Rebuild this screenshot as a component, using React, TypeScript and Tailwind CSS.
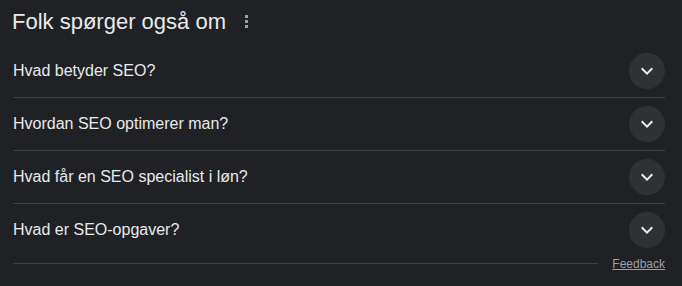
import React from "react";

const questions = [
    "Hvad betyder SEO?",
    "Hvordan SEO optimerer man?",
    "Hvad får en SEO specialist i løn?",
    "Hvad er SEO-opgaver?",
];

// Material "expand more" chevron
const Chevron: React.FC = () => (
    <svg width="24" height="24" viewBox="0 0 24 24" fill="#e8eaed">
        <path d="M7.41 8.59L12 13.17l4.59-4.58L18 10l-6 6-6-6 1.41-1.41z" />
    </svg>
);

const App: React.FC = () => {
    return (
        <div
            className="min-h-screen w-full bg-[#202124] text-[#e8eaed] pl-[12px] pr-[17px]"
            style={{ fontFamily: '"Liberation Sans", Arial, sans-serif' }}
        >
            {/* Heading */}
            <div className="flex items-start h-[45px] pt-[8px]">
                <h2 className="text-[22px] leading-[28px] font-normal">
                    Folk spørger også om
                </h2>
                <button className="ml-[18px] mt-[7px] w-[5px] flex justify-center">
                    <svg width="3" height="13" viewBox="0 0 3 13" fill="#9aa0a6">
                        <rect x="0" y="0" width="3" height="3" />
                        <rect x="0" y="5" width="3" height="3" />
                        <rect x="0" y="10" width="3" height="3" />
                    </svg>
                </button>
            </div>

            {/* Questions */}
            <div className="pl-[1px]">
                {questions.map((q, ind) => (
                    <div
                        key={q}
                        className={`flex items-center justify-between ${
                            ind < questions.length - 1
                                ? "h-[53px] border-b border-[#3c4043]"
                                : "h-[52px]"
                        }`}
                    >
                        <span className="text-[16px] leading-[24px]">{q}</span>
                        <div className="w-[36px] h-[36px] rounded-full bg-[#303134] flex items-center justify-center">
                            <Chevron />
                        </div>
                    </div>
                ))}

                {/* Feedback row */}
                <div className="flex items-center h-[16px] gap-[14px]">
                    <div className="flex-1 h-px bg-[#3c4043] mt-[-1px]" />
                    <a className="text-[12px] leading-[16px] text-[#9aa0a6] underline cursor-pointer">
                        Feedback
                    </a>
                </div>
            </div>
        </div>
    );
};

export default App;
